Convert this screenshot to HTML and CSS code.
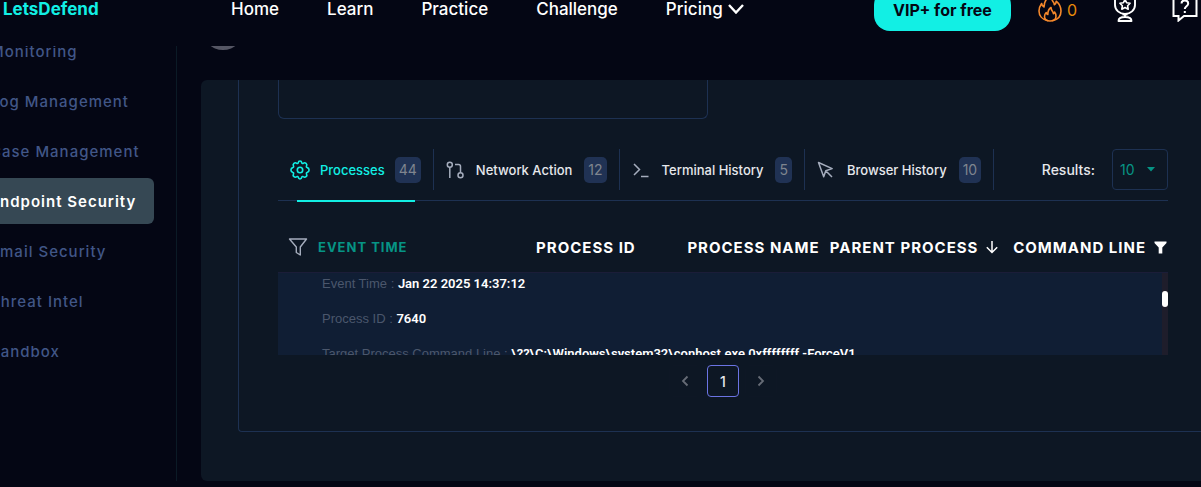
FILE: index.html
```
<!DOCTYPE html>
<html lang="en">
<head>
<meta charset="utf-8">
<title>LetsDefend - Endpoint Security</title>
<link rel="stylesheet" href="styles.css">
</head>
<body>
<header class="topbar">
  <div class="topbar-inner">
    <a class="brand" href="#">LetsDefend</a>
    <nav class="main-nav" aria-label="Main">
      <a href="#">Home</a>
      <a href="#">Learn</a>
      <a href="#">Practice</a>
      <a href="#">Challenge</a>
      <a class="has-menu" href="#">Pricing
        <svg width="16" height="10" viewBox="0 0 16 10" fill="none" stroke="currentColor" stroke-width="2.4"><path d="M1 1l7 7.5L15 1"/></svg>
      </a>
    </nav>
    <div class="actions">
      <button class="vip" type="button">VIP+ for free</button>
      <a class="streak" href="#" aria-label="Streak 0">
        <svg width="24" height="28" viewBox="0 0 24 28" fill="none" stroke="currentColor" stroke-width="1.6" stroke-linejoin="round" stroke-linecap="round"><path d="M9.500 26.500C4 25.500 1 21.500 1 17c0-3 1.200-5.500 2.600-7.500.4 2 1.200 3 2.400 3.500C6 8 9 3.500 13.500 1c-.5 3 .3 5 1.800 7 .7.800 1 1.700 1 2.800 1.400-.8 1.900-2 1.900-3.600C21.500 10 23 13.500 23 17c0 4.800-3 8.500-8.300 9.500"/><path d="M12 27c-3.700 0-5.500-2-5.500-4.500 0-1.600.7-3 1.700-4 .3 1.200.8 1.800 1.600 2 0-3 .9-5.500 3.200-7 0 2 .7 3 1.700 4.200.5.600.7 1.300.7 2 .8-.4 1.100-1 1.200-1.700 1 1.300 1.400 2.700 1.400 4.300C18 25 16 27 12 27z"/></svg>
        <span>0</span>
      </a>
      <a class="trophy" href="#" aria-label="Achievements">
        <svg width="24" height="32" viewBox="0 0 24 32" fill="none" stroke="currentColor" stroke-width="1.900" stroke-linejoin="round"><path d="M2 3v12c0 5 4.500 9 10 9s10-4 10-9V3z"/><path d="M9.500 24.500h5M12 24v3M5.500 31c0-2.500 2.500-4 6.500-4s6.500 1.500 6.500 4z"/><path d="M12 9.500l1.600 3.200 3.500.5-2.500 2.500.6 3.500-3.200-1.700-3.200 1.700.6-3.500-2.500-2.500 3.500-.5z" stroke-width="1.600"/></svg>
      </a>
      <a class="help" href="#" aria-label="Help">
        <svg width="26" height="32" viewBox="0 0 26 32" fill="none" stroke="currentColor" stroke-width="2"><path d="M1.500 2h23v24H12l-5.500 4.500V26h-5z"/><path d="M9.500 13.500c0-2 1.400-3 3.300-3s3.400 1.100 3.400 3c0 2.600-3.400 2.800-3.400 5.500" /><path d="M12.800 21v2"/></svg>
      </a>
    </div>
  </div>
</header>

<div class="layout">
  <nav class="sidebar" aria-label="Sections">
    <a href="#">Monitoring</a>
    <a href="#">Log Management</a>
    <a href="#">Case Management</a>
    <a class="current" href="#" aria-current="page">Endpoint Security</a>
    <a href="#">Email Security</a>
    <a href="#">Threat Intel</a>
    <a href="#">Sandbox</a>
  </nav>

  <main class="content">
    <div class="above"><div class="avatar"></div></div>
    <section class="panel">
      <div class="frame">
        <div class="info-box"></div>

        <div class="toolbar">
          <div class="tabs" role="tablist">
            <button class="tab active" type="button" role="tab" aria-selected="true">
              <svg width="20" height="20" viewBox="0 0 20 20" fill="none" stroke="currentColor" stroke-width="1.600" stroke-linejoin="round"><path d="M8.200 2.800C8.600 .4 11.400 .4 11.800 2.800c.1.600.9.900 1.400.5 2-1.400 4.500.6 3.300 2.900-.3.600 0 1.200.7 1.400 2.500.5 2.500 4.300 0 4.800-.7.200-1 .800-.7 1.400 1.200 2.300-1.300 4.300-3.300 2.900-.5-.4-1.300-.1-1.400.5-.4 2.400-3.200 2.400-3.600 0-.1-.6-.9-.9-1.400-.5-2 1.400-4.500-.6-3.300-2.900.3-.6 0-1.200-.7-1.400-2.500-.5-2.500-4.300 0-4.800.7-.2 1-.8.7-1.400-1.200-2.300 1.300-4.300 3.300-2.900.5.400 1.300.1 1.400-.5z"/><circle cx="10" cy="10" r="2.700"/></svg>
              <span>Processes</span><span class="badge">44</span>
            </button>
            <button class="tab" type="button" role="tab">
              <svg width="18" height="18" viewBox="0 0 18 18" fill="none" stroke="currentColor" stroke-width="1.500"><circle cx="3.800" cy="3.800" r="2.500"/><path d="M3.800 6.300V17M9 3.500h3.500c1.300 0 2 .7 2 2v6.200"/><circle cx="14.500" cy="14.200" r="2.500"/></svg>
              <span>Network Action</span><span class="badge">12</span>
            </button>
            <button class="tab" type="button" role="tab">
              <svg width="18" height="18" viewBox="0 0 18 18" fill="none" stroke="currentColor" stroke-width="1.500"><path d="M2 3l5.500 5.500L2 14M9 15.500h7.500"/></svg>
              <span>Terminal History</span><span class="badge">5</span>
            </button>
            <button class="tab" type="button" role="tab">
              <svg width="18" height="18" viewBox="0 0 18 18" fill="none" stroke="currentColor" stroke-width="1.500" stroke-linejoin="round"><path d="M1.500 1.500l5.200 14.300 2.100-6 6.400-2.200zM9 10l6 6"/></svg>
              <span>Browser History</span><span class="badge">10</span>
            </button>
          </div>
          <div class="results">
            <label for="results">Results:</label>
            <div class="select-wrap">
              <select id="results"><option>10</option><option>25</option><option>50</option></select>
              <svg width="8" height="5" viewBox="0 0 8 5" fill="currentColor"><path d="M0 0h8L4 4.500z"/></svg>
            </div>
          </div>
        </div>

        <table class="processes">
          <colgroup><col class="c-time"><col class="c-id"><col class="c-name"><col class="c-parent"><col class="c-cmd"></colgroup>
          <thead>
            <tr>
              <th scope="col"><span class="head time">
                <svg width="20" height="18" viewBox="0 0 20 18" fill="none" stroke="currentColor" stroke-width="1.400" stroke-linejoin="round"><path d="M1.500 1h17l-6.200 8v8l-4-2.500V9z"/></svg>Event Time</span></th>
              <th scope="col"><span class="head">Process ID</span></th>
              <th scope="col"><span class="head">Process Name</span></th>
              <th scope="col"><span class="head">Parent Process
                <svg width="12" height="14" viewBox="0 0 12 14" fill="none" stroke="currentColor" stroke-width="1.500"><path d="M6 1v11.500M.8 7.300L6 12.500l5.200-5.200"/></svg></span></th>
              <th scope="col"><span class="head cmd">Command Line
                <svg width="13" height="13" viewBox="0 0 13 13" fill="currentColor"><path d="M.5.500h12v1.500L8.300 6.500v6H4.700v-6L.5 2z"/></svg></span></th>
            </tr>
          </thead>
          <tbody>
            <tr><td colspan="5">
              <div class="detail">
                <div class="fields">
                  <p><span>Event Time :</span> <b>Jan 22 2025 14:37:12</b></p>
                  <p><span>Process ID :</span> <b>7640</b></p>
                  <p><span>Target Process Command Line :</span> <b>\??\C:\Windows\system32\conhost.exe 0xffffffff -ForceV1</b></p>
                </div>
                <div class="track"><div class="thumb"></div></div>
              </div>
            </td></tr>
          </tbody>
        </table>

        <nav class="pager" aria-label="Pages">
          <button type="button" aria-label="Previous page"><svg width="8" height="12" viewBox="0 0 8 12" fill="none" stroke="currentColor" stroke-width="1.800"><path d="M6.500 1.500L2 6l4.500 4.500"/></svg></button>
          <button class="on" type="button" aria-current="page">1</button>
          <button type="button" aria-label="Next page"><svg width="8" height="12" viewBox="0 0 8 12" fill="none" stroke="currentColor" stroke-width="1.800"><path d="M1.500 1.500L6 6l-4.500 4.500"/></svg></button>
        </nav>
      </div>
    </section>
  </main>
</div>
</body>
</html>
```
FILE: styles.css
```
:root {
  --page: #040614;
  --panel: #0d1724;
  --line: #1d3152;
  --cyan: #12efe4;
  --teal: #069485;
}
* { box-sizing: border-box; }
body {
  margin: 0;
  overflow: hidden;
  background: var(--page);
  color: #fff;
  font-family: Inter, "Open Sans", sans-serif;
  font-size: 14px;
}
a { color: inherit; text-decoration: none; }
button { font: inherit; color: inherit; background: none; border: 0; padding: 0; }
svg { display: block; flex: none; }

/* top bar */
.topbar { overflow: hidden; }
.topbar-inner {
  display: flex;
  align-items: center;
  height: 72px;
  margin-top: -26px;
  padding-left: 3px;
}
.brand { width: 228px; padding-bottom: 2px; color: var(--cyan); font-size: 17px; font-weight: 700; }
.main-nav { display: flex; gap: 48px; padding-bottom: 2px; font-size: 17px; font-weight: 500; }
.has-menu { display: flex; align-items: center; gap: 5px; }
.actions { display: flex; align-items: center; margin-left: auto; padding-right: 3px; }
.vip {
  width: 137px;
  height: 42px;
  border-radius: 16px;
  background: var(--cyan);
  color: #040614;
  font-size: 16px;
  font-weight: 700;
}
.streak { display: flex; align-items: center; gap: 5px; margin-left: 27px; color: #f6892c; font-size: 16px; }
.streak span { color: #e88a0a; }
.streak svg { margin-bottom: 4px; }
.trophy { margin-left: 36px; padding-bottom: 8px; }
.help { margin-left: 35px; padding-bottom: 8px; }

/* page columns */
.layout { display: flex; align-items: stretch; padding-bottom: 6px; }
.sidebar {
  flex: none;
  display: flex;
  flex-direction: column;
  gap: 4px;
  width: 177px;
  padding-right: 22px;
  border-right: 1px solid #0b1a26;
  overflow: hidden;
}
.sidebar a {
  display: flex;
  align-items: center;
  height: 46px;
  margin-left: -24px;
  padding-left: 14px;
  border-radius: 6px;
  color: #415687;
  font-size: 15px;
  font-weight: 500;
  letter-spacing: 1px;
  white-space: nowrap;
}
.sidebar a:first-child { margin-top: -18px; }
.sidebar .current { background: #364854; color: #fff; font-weight: 600; }
.content { flex: 1; min-width: 0; margin-left: 24px; }
.above { height: 34px; padding-left: 1px; overflow: hidden; }
.avatar { width: 42px; height: 42px; margin-top: -38px; border-radius: 50%; background: #555664; }

/* panel */
.panel { padding: 0 0 49px 37px; border-radius: 6px 0 0 6px; background: var(--panel); }
.frame {
  padding: 0 33px 34px 39px;
  border: solid var(--line);
  border-width: 0 0 1px 1px;
  border-bottom-left-radius: 4px;
}
.info-box {
  width: 430px;
  max-width: 100%;
  height: 39px;
  border: 1px solid var(--line);
  border-top: 0;
  border-radius: 0 0 6px 6px;
}

/* tabs */
.toolbar {
  display: flex;
  justify-content: space-between;
  margin-top: 30px;
  border-bottom: 1px solid var(--line);
}
.tabs { display: flex; }
.tab {
  position: relative;
  display: flex;
  align-items: center;
  gap: 12px;
  height: 41px;
  margin-bottom: 10px;
  padding: 0 12px;
  border-right: 1px solid var(--line);
  color: #e6e8ec;
  font-size: 13px;
  font-weight: 500;
  white-space: nowrap;
}
.tab svg { color: #a5adbd; }
.tab.active { gap: 10px; }
.tab.active, .tab.active svg { color: var(--cyan); }
.tab.active::after {
  content: "";
  position: absolute;
  left: 19px;
  right: 18px;
  bottom: -12px;
  height: 2px;
  background: var(--cyan);
}
.badge {
  padding: 5px 4px;
  border-radius: 5px;
  background: #203254;
  color: #7f858f;
  font-size: 14px;
  line-height: 16px;
  font-weight: 400;
}
.results { display: flex; gap: 17px; height: 41px; align-items: center; }
.results label { color: #e6e8ec; font-weight: 500; }
.select-wrap { display: grid; align-items: center; width: 56px; color: var(--teal); }
.select-wrap > * { grid-area: 1 / 1; }
.select-wrap svg { justify-self: end; margin-right: 13px; pointer-events: none; }
select {
  appearance: none;
  width: 100%;
  height: 41px;
  padding: 0 7px;
  border: 1px solid var(--line);
  border-radius: 4px;
  background: transparent;
  color: inherit;
  font: inherit;
}

/* table */
.processes { width: 100%; margin-top: 21px; border-collapse: collapse; table-layout: fixed; }
.c-time { width: 29%; }
.c-id { width: 17%; }
.c-name { width: 16%; }
.c-parent { width: 20%; }
.c-cmd { width: 18%; }
th, td { padding: 0; text-align: left; }
.head {
  display: flex;
  align-items: center;
  gap: 8px;
  height: 50px;
  font-size: 15px;
  font-weight: 700;
  letter-spacing: 1px;
  text-transform: uppercase;
  white-space: nowrap;
}
.head.time { padding-left: 10px; gap: 10px; color: var(--teal); font-size: 13px; }
.head.time svg { color: #a5adbd; }
.head.cmd { justify-content: flex-end; padding-right: 1px; }
.detail {
  display: flex;
  height: 83px;
  border-top: 1px solid #1b1d38;
  background: #101e34;
  overflow: hidden;
}
.fields { flex: 1; min-width: 0; padding-left: 44px; color: #4b576c; font-family: "Liberation Sans", Arial, sans-serif; font-size: 13px; }
.fields p { margin: 0; height: 35px; line-height: 22px; white-space: nowrap; }
.fields b { color: #fff; font-family: Roboto, sans-serif; font-weight: 600; }
.track { width: 6px; padding-top: 18px; background: #1e1d2b; }
.thumb { height: 16px; border-radius: 3px; background: #fff; }

/* pager */
.pager { display: flex; justify-content: center; gap: 6px; margin-top: 10px; }
.pager button {
  display: grid;
  place-items: center;
  width: 32px;
  height: 32px;
  border: 1px solid #0e1725;
  border-radius: 4px;
  color: #666c76;
}
.pager .on { border-color: #6b74e4; color: #e6e8ec; font-weight: 500; }
```
